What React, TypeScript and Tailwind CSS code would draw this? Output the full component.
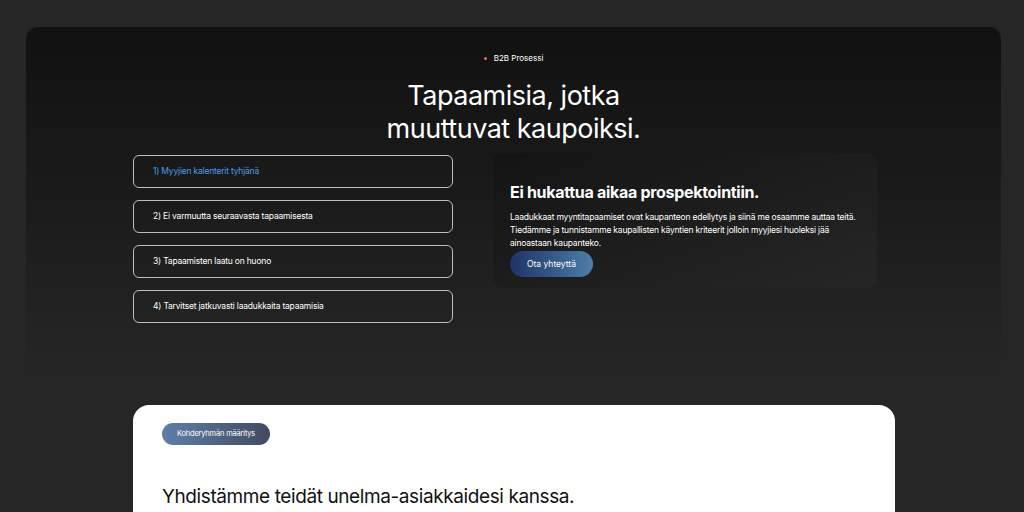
export default function App() {
  const items = [
    "1) Myyjien kalenterit tyhjänä",
    "2) Ei varmuutta seuraavasta tapaamisesta",
    "3) Tapaamisten laatu on huono",
    "4) Tarvitset jatkuvasti laadukkaita tapaamisia",
  ];
  return (
    <div className="w-[1024px] h-[512px] overflow-hidden bg-[#262626] pt-[27px] px-[26px] font-[Inter]">
      <div className="w-[975px] h-[700px] rounded-t-[12px] bg-[linear-gradient(180deg,#111111_0%,#1b1b1b_25%,#262626_50%,#282828_100%)] flex flex-col items-center pt-[25px]">
        <div className="flex items-center gap-[7px] text-[8px] text-white h-[12px]">
          <span className="w-[3px] h-[3px] rounded-full bg-[#e8773a]" />
          B2B Prosessi
        </div>
        <h1 className="mt-[15px] text-center text-white text-[27px] leading-[33px] tracking-[-0.5px]">
          Tapaamisia, jotka
          <br />
          muuttuvat kaupoiksi.
        </h1>
        <div className="self-start ml-[107px] w-[744px] flex justify-between mt-[8px]">
          <div className="w-[320px] flex flex-col gap-[12px] pt-[2px]">
            {items.map((t, i) => (
              <div
                key={t}
                className={`h-[33px] rounded-[6px] border border-[#bdbdbd] flex items-center pl-[19px] text-[8.5px] tracking-[-0.2px] ${i === 0 ? "text-[#4d9de8]" : "text-white"}`}
              >
                {t}
              </div>
            ))}
          </div>
          <div className="w-[384px] h-[135px] rounded-[10px] bg-gradient-to-br from-[#141414] to-[#262626] px-[17px] pt-[29px]">
            <div className="text-white font-bold text-[16px] tracking-[-0.3px] leading-[20px]">
              Ei hukattua aikaa prospektointiin.
            </div>
            <p className="mt-[9px] text-white text-[8.5px] leading-[13px] tracking-[-0.2px]">
              Laadukkaat myyntitapaamiset ovat kaupanteon edellytys ja siinä me osaamme auttaa teitä. Tiedämme ja tunnistamme kaupallisten käyntien kriteerit jolloin myyjiesi huoleksi jää ainoastaan kaupanteko.
            </p>
            <div className="mt-[1px] w-[83px] h-[26px] rounded-full bg-gradient-to-r from-[#1e3466] to-[#4c7fa8] text-white text-[8.5px] flex items-center justify-center">
              Ota yhteyttä
            </div>
          </div>
        </div>
        <div className="self-start ml-[107px] mt-[82px] w-[762px] h-[300px] bg-white rounded-t-[16px] pl-[29px] pt-[18px]">
          <div className="w-[108px] h-[22px] rounded-full bg-gradient-to-r from-[#5f7fa8] to-[#414b61] text-white text-[7.5px] tracking-[-0.2px] flex items-center justify-center">
            Kohderyhmän määritys
          </div>
          <div className="mt-[38px] text-[#111] text-[19px] tracking-[-0.4px]">
            Yhdistämme teidät unelma-asiakkaidesi kanssa.
          </div>
        </div>
      </div>
    </div>
  );
}
